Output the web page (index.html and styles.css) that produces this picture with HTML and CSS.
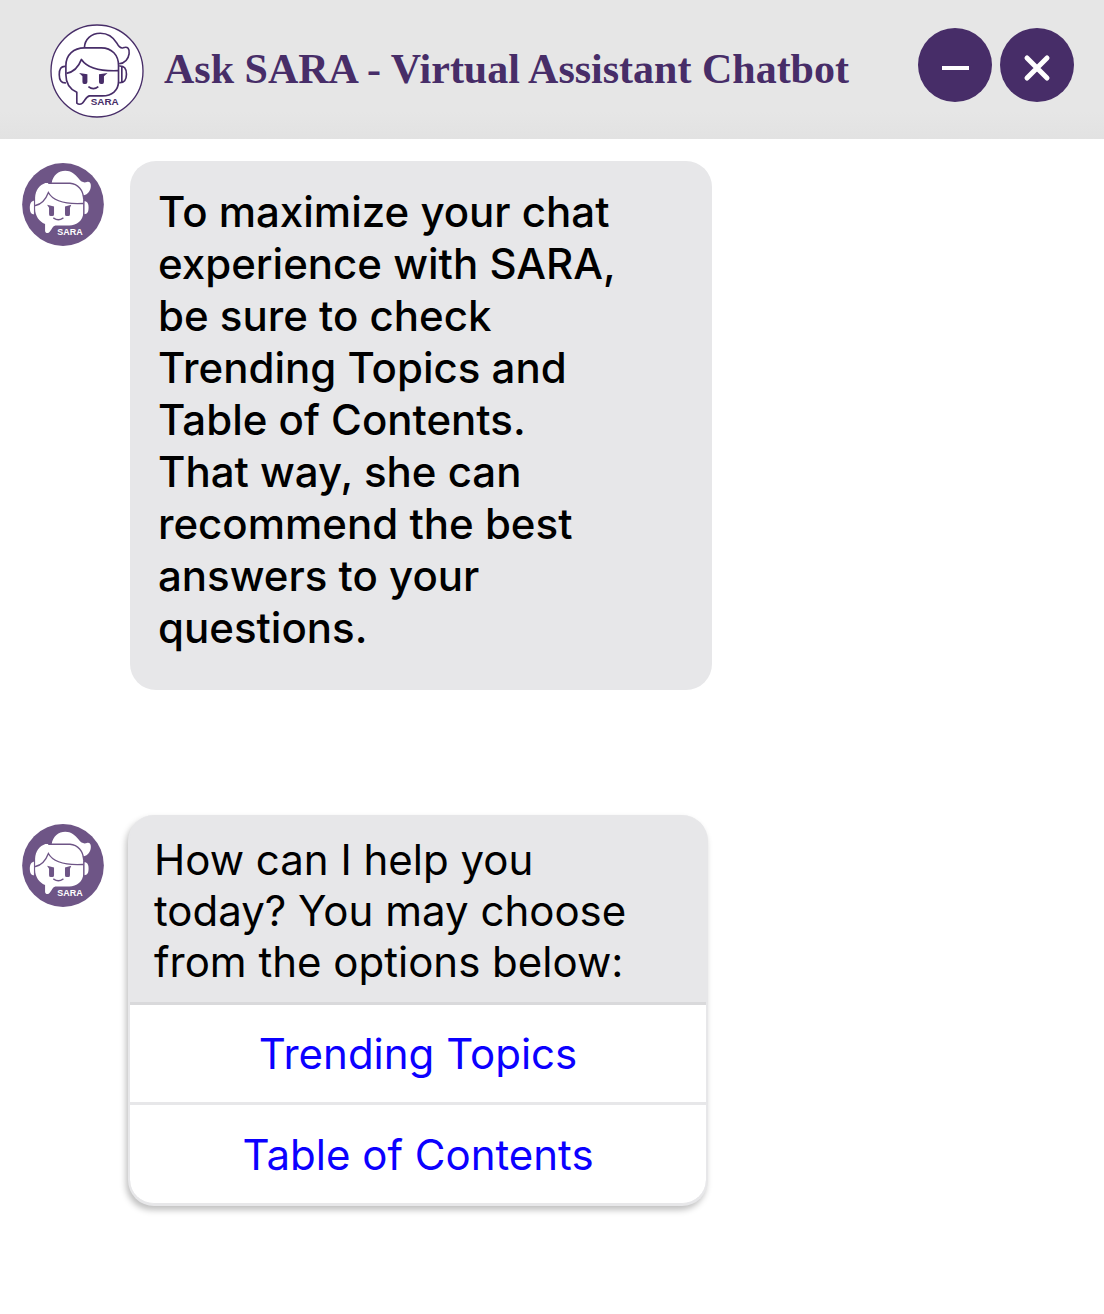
FILE: index.html
```html
<!DOCTYPE html>
<html lang="en">
	<head>
		<title>Ask SARA - Virtual Assistant Chatbot</title>
		<meta charset="utf-8">
		<meta name="viewport" content="width=device-width, initial-scale=1">
		<link rel="stylesheet" href="styles.css">
	</head>
	<body>
		<svg class="defs" aria-hidden="true">
			<symbol id="sara" viewBox="0 0 246 250">
				<ellipse cx="123" cy="125" rx="123" ry="125" fill="#6e5586"/>
				<g fill="#fff">
					<path d="M89 60C92 37 110 23 130 23C147 23 160 33 170 47C178 59 188 60 195 57C205 53 209 65 206 76C203 88 194 97 182 98L160 76Z"/>
					<path d="M70 60H144C170 64 184 85 184 112V150C184 174 164 188 142 188H100C92 190 90 198 83 207C79 213 69 212 69 204V184C51 176 39 160 39 138V104C40 82 52 66 70 60Z"/>
					<path d="M37 114V155C27 155 23 148 23 135C23 121 28 114 37 114Z"/>
					<path d="M187 115C197 115 200 122 200 135C200 148 196 154 187 154Z"/>
				</g>
				<g fill="none" stroke="#6e5586" stroke-width="4" stroke-linecap="round">
					<path d="M80 61H144C168 63 184 82 185 107"/>
					<path d="M40 128C61 124 71 110 79 89C91 111 126 125 183 122"/>
					<path d="M37 113V156M186 112V156" stroke-width="3"/>
					<path d="M95 166Q109 176 123 166"/>
				</g>
				<g fill="#6e5586">
					<path d="M75 126L96 131V154Q96 160 91 160H86Q81 160 81 154V135Z"/>
					<path d="M148 126L129 131V154Q129 160 134 160H139Q144 160 144 154V135Z"/>
				</g>
				<text x="106" y="218" class="avatar-text">SARA</text>
			</symbol>
		</svg>

		<header class="header">
			<svg class="logo" viewBox="30 29 282 284" role="img" aria-label="SARA">
				<circle cx="171" cy="171" r="139" fill="#fff" stroke="#472d68" stroke-width="4"/>
				<g fill="none" stroke="#472d68" stroke-width="5" stroke-linejoin="round">
					<path d="M133 100C134 75 153 57 181 57C205 57 221 70 231 87C237 98 244 103 250 101C264 95 270 105 268 119C265 137 255 147 238 149"/>
					<path d="M110 268V235C90 226 77 207 77 182V155C77 122 101 101 133 101H184C216 101 236 123 236 154V202C236 230 216 246 187 246H149C138 247 136 259 127 268Q118 275 110 268Z"/>
					<path d="M79 178C103 174 116 157 124 136C141 161 180 172 235 170"/>
					<path d="M76 157C62 156 57 165 57 182C57 199 63 208 77 207"/>
					<path d="M238 156C253 155 260 163 260 181C260 198 253 207 238 206M246 157V206"/>
					<path d="M145 218Q160 230 175 218"/>
				</g>
				<g fill="#472d68">
					<path d="M117 177L142 181V204Q142 210 136 210H132Q127 210 127 204V187Z"/>
					<path d="M203 177L177 181V204Q177 210 183 210H187Q192 210 192 204V187Z"/>
				</g>
				<text x="152" y="273" class="logo-text">SARA</text>
			</svg>
			<h1 class="title">Ask SARA - Virtual Assistant Chatbot</h1>
			<div class="controls">
				<button type="button" class="round-btn" aria-label="Minimize">
					<svg viewBox="0 0 74 74"><path d="M24 40H51" stroke="#fff" stroke-width="4"/></svg>
				</button>
				<button type="button" class="round-btn" aria-label="Close">
					<svg viewBox="0 0 74 74"><path d="M27 30L47 50M47 30L27 50" stroke="#fff" stroke-width="5" stroke-linecap="round"/></svg>
				</button>
			</div>
		</header>

		<main class="chat">
			<div class="message">
				<svg class="avatar" role="img" aria-label="SARA"><use href="#sara"/></svg>
				<div class="bubble">
					<p>To maximize your chat experience with SARA, be sure to check Trending Topics and Table of Contents.</p>
					<p>That way, she can recommend the best answers to your questions.</p>
				</div>
			</div>

			<div class="message">
				<svg class="avatar avatar-low" role="img" aria-label="SARA"><use href="#sara"/></svg>
				<div class="card">
					<p class="question">How can I help you today? You may choose from the options below:</p>
					<button type="button" class="option">Trending Topics</button>
					<button type="button" class="option">Table of Contents</button>
				</div>
			</div>
		</main>
	</body>
</html>
```
FILE: styles.css
```css
*{ margin:0; padding:0; box-sizing:border-box; }
body{ background:#fff; color:#000; font-family:Inter, "Liberation Sans", sans-serif; font-size:42px; }
button{ border:0; font:inherit; cursor:pointer; }
.defs{ display:none; }
.logo-text{ font:bold 30px "Liberation Sans", sans-serif; fill:#472d68; }
.avatar-text{ font:bold 27px "Liberation Sans", sans-serif; fill:#fff; }

/* header */
.header{ display:flex; align-items:flex-start; padding:24px 30px 21px 50px; background:linear-gradient(#e6e6e6 80%, #e2e2e2); }
.logo{ flex:none; width:94px; height:94px; }
.title{ flex:1; margin-left:20px; color:#472d68; font:bold 42px/90px "Liberation Serif", serif; }
.controls{ display:flex; gap:8px; padding-top:4px; }
.round-btn{ width:74px; height:74px; border-radius:50%; background:#472d68; }
.round-btn svg{ display:block; }

/* messages */
.chat{ display:flex; flex-direction:column; gap:125px; padding:22px; }
.message{ display:flex; align-items:flex-start; gap:24px; }
.avatar{ flex:none; width:82px; height:83px; margin-top:2px; }
.avatar-low{ margin-top:9px; }
.bubble{ width:582px; margin-left:2px; padding:25px 50px 36px 28px; border-radius:26px; background:#e7e7e9; font-weight:500; line-height:52px; }
.card{ width:580px; border:2px solid #e7e7e9; border-top:0; border-radius:26px; background:#e7e7e9; overflow:hidden; box-shadow:-2px 4px 6px rgba(0,0,0,.25); }
.question{ padding:19px 50px 15px 24px; line-height:51px; }
.option{ display:block; width:100%; height:100px; border-top:3px solid #e7e7e9; background:#fff; color:#0b00ff; }
.question + .option{ border-top-color:#d9d9db; }
.option:last-child{ height:102px; border-bottom:1px solid #e7e7e9; border-radius:0 0 24px 24px; }
```
